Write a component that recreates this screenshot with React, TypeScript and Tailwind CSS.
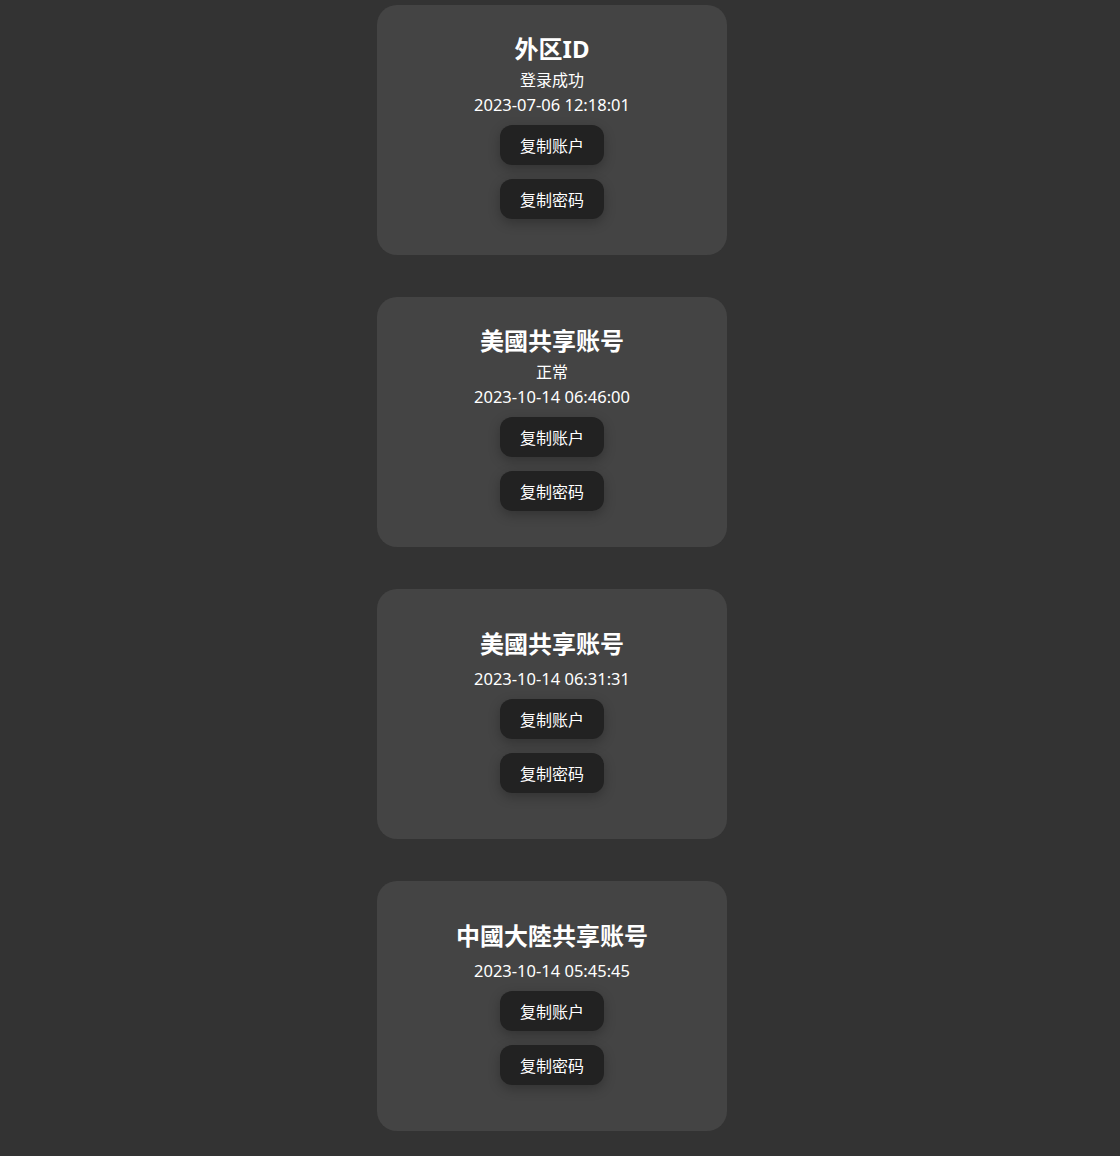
const accounts = [
  { title: "外区ID", status: "登录成功", time: "2023-07-06 12:18:01" },
  { title: "美國共享账号", status: "正常", time: "2023-10-14 06:46:00" },
  { title: "美國共享账号", status: "", time: "2023-10-14 06:31:31" },
  { title: "中國大陸共享账号", status: "", time: "2023-10-14 05:45:45" },
];

function AccountCard({ title, status, time }: { title: string; status: string; time: string }) {
  return (
    <div className="w-[350px] h-[250px] rounded-[20px] bg-[#444444] flex flex-col items-center justify-center pb-[8px] text-white">
      <h2 className="text-[24px] leading-[32px] font-bold">{title}</h2>
      {status ? <p className="mt-[3px] text-[16px] leading-6">{status}</p> : null}
      <p className={status ? "mt-[1px] text-[16.5px] leading-6" : "mt-[7px] text-[16.5px] leading-6"}>{time}</p>
      <button className="mt-[8px] w-[104px] h-[40px] rounded-[12px] bg-[#222222] text-white text-[16px] pt-[2px] shadow-[0_4px_12px_rgba(0,0,0,0.25)]">
        复制账户
      </button>
      <button className="mt-[14px] w-[104px] h-[40px] rounded-[12px] bg-[#222222] text-white text-[16px] pt-[2px] shadow-[0_4px_12px_rgba(0,0,0,0.25)]">
        复制密码
      </button>
    </div>
  );
}

export default function App() {
  return (
    <div
      className="min-h-[1156px] bg-[#333333] flex flex-col items-center gap-[42px] pt-[5px] pb-[25px] pr-[16px]"
      style={{ fontFamily: '"Noto Sans", "Noto Sans CJK SC", sans-serif' }}
    >
      {accounts.map((a, i) => (
        <AccountCard key={i} {...a} />
      ))}
    </div>
  );
}
